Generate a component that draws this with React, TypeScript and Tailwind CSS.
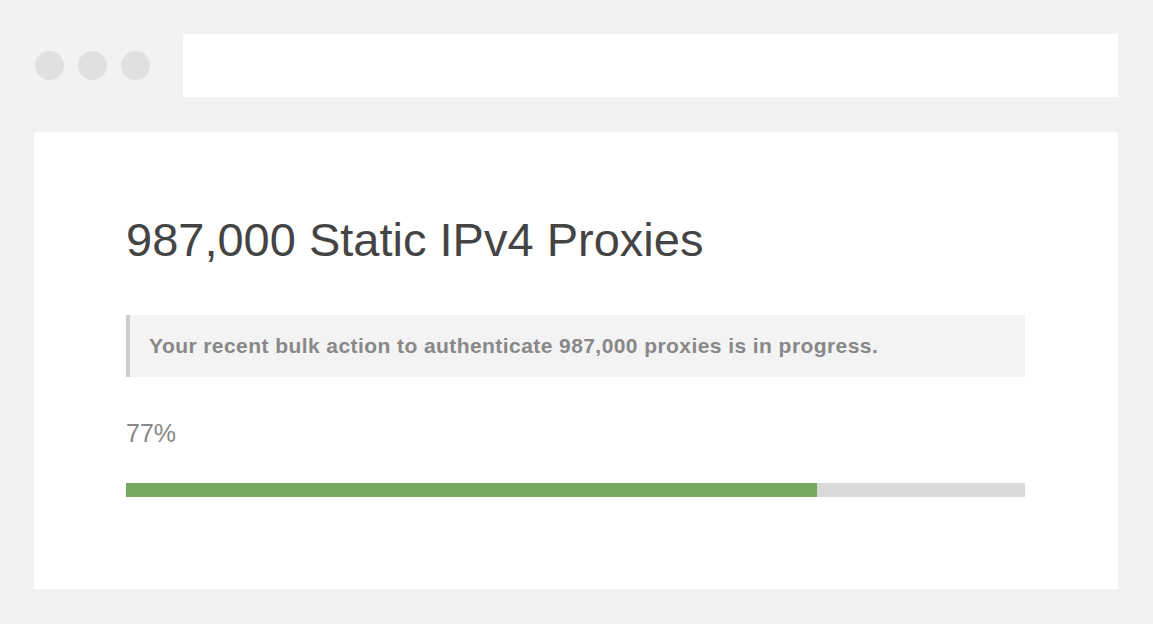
export default function App() {
  return (
    <div className="w-[1153px] h-[624px] bg-[#f2f2f2] pt-[34px] pl-[34px] pr-[35px]" style={{ fontFamily: '"Liberation Sans", Arial, sans-serif' }}>
      <div className="flex items-center h-[63px]">
        <div className="flex gap-[14px] pl-[1px]">
          <div className="w-[29px] h-[29px] rounded-full bg-[#e0e0e0]" />
          <div className="w-[29px] h-[29px] rounded-full bg-[#e0e0e0]" />
          <div className="w-[29px] h-[29px] rounded-full bg-[#e0e0e0]" />
        </div>
        <div className="ml-[33px] flex-1 h-[63px] bg-white" />
      </div>
      <div className="mt-[35px] h-[457px] bg-white pl-[92px] pr-[93px] pt-[80px]">
        <h1 className="text-[47px] leading-[56px] text-[#444444]">987,000 Static IPv4 Proxies</h1>
        <div className="mt-[47px] h-[62px] bg-[#f3f3f3] border-l-[4px] border-[#cccccc] flex items-center pl-[19px]">
          <p className="text-[21px] font-bold text-[#888888] tracking-[0.43px]">Your recent bulk action to authenticate 987,000 proxies is in progress.</p>
        </div>
        <div className="mt-[41px] text-[25px] leading-[30px] text-[#888888]">77%</div>
        <div className="mt-[35px] h-[14px] bg-[#dadada]">
          <div className="h-full bg-[#76a860]" style={{ width: '76.9%' }} />
        </div>
      </div>
    </div>
  );
}
